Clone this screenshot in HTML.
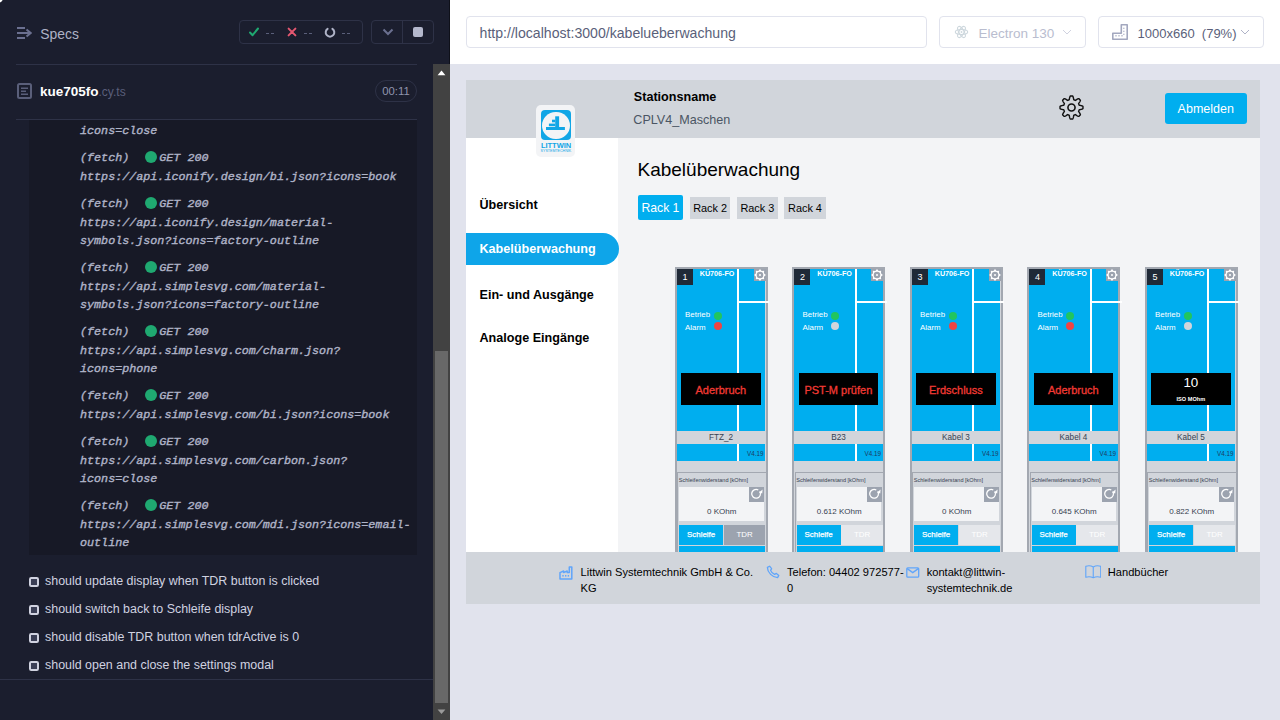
<!DOCTYPE html>
<html><head><meta charset="utf-8">
<style>
*{box-sizing:border-box;margin:0;padding:0}
html,body{width:1280px;height:720px;overflow:hidden;font-family:"Liberation Sans",sans-serif}
body{position:relative;background:#1b1e2e}
.abs{position:absolute}
#left{position:absolute;left:0;top:0;width:450px;height:720px;background:#1b1e2e;color:#d0d2e0;overflow:hidden}
.hline{position:absolute;height:1px;background:#2e3247}
.mono{font-family:"Liberation Mono",monospace;font-style:italic;font-weight:normal;-webkit-text-stroke:0.4px #afb3c7;font-size:11.73px;color:#afb3c7;white-space:pre;position:absolute;left:80px;line-height:14px}
.dot{position:absolute;left:145.2px;width:12.3px;height:12.3px;border-radius:50%;background:#1fa971}
.test{position:absolute;left:45px;font-size:12.45px;line-height:14px;color:#d0d2e0;white-space:nowrap}
.cb{position:absolute;left:28.8px;width:10.2px;height:10.2px;border:2px solid #d0d2e0;background:#3b3f56;border-radius:2.2px}
#right{position:absolute;left:450px;top:0;width:830px;height:720px;background:#e1e3ed}
#toolbar{position:absolute;left:0;top:0;width:830px;height:64px;background:#fff}
.inp{position:absolute;top:16px;height:32px;border:1px solid #e1e3ed;border-radius:4px;background:#fff;font-size:14px;color:#5a5f7a;white-space:nowrap}
/* APPCSS */
#app{position:absolute;left:16px;top:80px;width:794px;height:524px;background:#f3f4f6;overflow:hidden;color:#000}
#app .a{position:absolute;white-space:nowrap}
.hdr{position:absolute;left:0;top:0;width:794px;height:58px;background:#d1d5db}
.side{position:absolute;left:0;top:58px;width:152px;height:414px;background:#fff}
.foot{position:absolute;left:0;top:472px;width:794px;height:52px;background:#d1d5db}
.mod{position:absolute;width:93px;height:300px;background:#d1d5db;border:2px solid #a3a8b1;border-bottom:none}
.mod>div{position:absolute}
.m-blue{left:0;top:0;width:88.2px;height:192px;background:#00aeef}
.m-vl{left:60.4px;top:0;width:2.2px;height:192px;background:#fff}
.m-hl{left:60.4px;top:31.7px;width:32px;height:2.8px;background:#fff}
.m-num{left:0;top:0;width:16.1px;height:16px;background:#1f2937;color:#fff;font-size:9px;line-height:16px;text-align:center}
.m-type{left:22.8px;top:-0.3px;font-size:7.2px;font-weight:bold;color:#fff;white-space:nowrap}
.m-gear{left:76.8px;top:0;width:12.3px;height:12px;background:#9ca3af;display:flex;align-items:center;justify-content:center}
.m-gear svg{display:block}
.m-lbl{left:8.2px;font-size:7.9px;color:#fff;white-space:nowrap}
.m-led{left:37.1px;width:8px;height:8px;border-radius:50%}
.m-disp{left:4.2px;top:103.9px;width:79.5px;height:32px;background:#000;text-align:center}
.m-err{display:block;color:#f23a34;-webkit-text-stroke:0.3px #f23a34;font-size:11px;line-height:31.7px;padding-top:2.4px;white-space:nowrap}
.m-iso{position:absolute;left:0;right:0;top:2.4px;color:#fff;font-size:13.4px;line-height:16px}
.m-isol{position:absolute;left:0;right:0;top:22.7px;color:#fff;font-size:5.6px;font-weight:bold;line-height:7px}
.m-name{left:0;top:162px;width:88.2px;height:12.8px;background:#d1d5db;color:#374151;font-size:8.2px;line-height:13.9px;text-align:center;white-space:nowrap}
.m-ver{right:2.4px;top:180.9px;color:#1e3a5f;font-size:6.3px;white-space:nowrap}
.m-panel{left:0.3px;top:203.1px;width:89.6px;height:95px;background:#d1d5db;border:1px solid #a3a8b1;border-bottom:none}
.m-panel>div{position:absolute}
.m-plbl{left:0.5px;top:4.4px;font-size:5.57px;color:#374151;white-space:nowrap}
.m-box{left:1.2px;top:13.8px;width:84.6px;height:33.9px;background:#f3f4f6;text-align:center}
.m-val{position:absolute;left:0;right:0;top:19.9px;font-size:8px;line-height:10px;color:#374151;white-space:nowrap}
.m-ref{left:71.1px;top:13.8px;width:15.2px;height:15.3px;background:#9ca3af;display:flex;align-items:center;justify-content:center}
.m-btn1{left:2.3px;top:256.4px;width:43.9px;height:19.4px;background:#00aeef;color:#fff;-webkit-text-stroke:0.25px #fff;font-size:7.9px;line-height:20.8px;text-align:center}
.m-btn2{left:46.9px;top:256.4px;width:41.5px;height:19.4px;color:#fff;font-size:7.9px;line-height:20.8px;text-align:center}
.m-strip{left:2.3px;top:276.5px;width:86.1px;height:10px;background:#00aeef}
.nav{position:absolute;left:13.5px;font-size:12.6px;font-weight:bold;color:#000;white-space:nowrap;line-height:15px}
.rk{position:absolute;top:116.9px;height:21.9px;background:#d1d5db;font-size:10.9px;line-height:23.6px;text-align:center;color:#000;white-space:nowrap}
.ficon{position:absolute}
.ft{position:absolute;font-size:11.1px;line-height:15.6px;color:#000;white-space:nowrap}
/* END APPCSS */</style></head>
<body>
<div id="left">
  <svg id="corner" class="abs" style="left:0;top:0" width="4" height="4" viewBox="0 0 4 4"><path d="M0 0 H2.6 Q2 1.8 0 2.4 Z" fill="#fff"/></svg>
  <!-- header -->
  <svg class="abs" style="left:16px;top:26px" width="16" height="14" viewBox="0 0 16 14">
    <rect x="1" y="1" width="8" height="2" fill="#6b7090"/>
    <rect x="1" y="6" width="13" height="2" fill="#6b7090"/>
    <rect x="1" y="11" width="8" height="2" fill="#6b7090"/>
    <path d="M10.5 3.6 L14.6 7 L10.5 10.4" stroke="#6b7090" stroke-width="2" fill="none"/>
  </svg>
  <div class="abs" style="left:40.3px;top:26.3px;font-size:13.9px;color:#afb3c7;line-height:17px">Specs</div>

  <div class="abs" style="left:239px;top:20px;width:124px;height:24px;border:1px solid #2e3247;border-radius:4px"></div>
  <svg class="abs" style="left:249px;top:27px" width="10" height="10" viewBox="0 0 10 10"><path d="M1 5.5 L3.6 8.2 L9 1.5" stroke="#1fa971" stroke-width="2" fill="none" stroke-linecap="round" stroke-linejoin="round"/></svg>
  <div class="abs" style="left:266px;top:33px;width:3px;height:1px;background:#5a5f7a"></div><div class="abs" style="left:271px;top:33px;width:3px;height:1px;background:#5a5f7a"></div>
  <svg class="abs" style="left:287px;top:27px" width="10" height="10" viewBox="0 0 10 10"><path d="M1.6 1.6 L8.4 8.4 M8.4 1.6 L1.6 8.4" stroke="#e45770" stroke-width="2" fill="none" stroke-linecap="round"/></svg>
  <div class="abs" style="left:304px;top:33px;width:3px;height:1px;background:#5a5f7a"></div><div class="abs" style="left:309px;top:33px;width:3px;height:1px;background:#5a5f7a"></div>
  <svg class="abs" style="left:324px;top:27px" width="12" height="11" viewBox="0 0 12 11"><path d="M3.6 1.8 A4.3 4.3 0 1 0 8.4 1.8" stroke="#afb3c7" stroke-width="2" fill="none" stroke-linecap="round"/></svg>
  <div class="abs" style="left:342px;top:33px;width:3px;height:1px;background:#5a5f7a"></div><div class="abs" style="left:347px;top:33px;width:3px;height:1px;background:#5a5f7a"></div>

  <div class="abs" style="left:371px;top:20px;width:63px;height:24px;border:1px solid #2e3247;border-radius:4px"></div>
  <div class="abs" style="left:402px;top:20px;width:1px;height:24px;background:#2e3247"></div>
  <svg class="abs" style="left:382px;top:28px" width="12" height="8" viewBox="0 0 12 8"><path d="M1.5 1.5 L6 6 L10.5 1.5" stroke="#6b7090" stroke-width="2" fill="none"/></svg>
  <div class="abs" style="left:413px;top:27px;width:10px;height:10px;background:#b4b8cc;border-radius:2px"></div>

  <div class="hline" style="left:16px;top:64px;width:401px"></div>
  <div class="hline" style="left:16px;top:119px;width:401px"></div>

  <!-- file row -->
  <svg class="abs" style="left:17px;top:83px" width="15" height="16" viewBox="0 0 15 16"><rect x="1" y="1" width="13" height="14" rx="1.5" stroke="#5a5f7a" stroke-width="2" fill="none"/><rect x="4" y="4.5" width="7" height="1.5" fill="#5a5f7a"/><rect x="4" y="7.5" width="5" height="1.5" fill="#5a5f7a"/><rect x="4" y="10.5" width="7" height="1.5" fill="#5a5f7a"/></svg>
  <div class="abs" style="left:40px;top:84.2px;font-size:13.5px;line-height:16px;color:#fff;font-weight:bold">kue705fo<span style="font-weight:normal;color:#5a5f7a;font-size:12px">.cy.ts</span></div>
  <div class="abs" style="left:375px;top:80px;width:42px;height:22px;border:1px solid #2e3247;border-radius:11px;font-size:11.3px;color:#9095ad;text-align:center;line-height:21.6px">00:11</div>

  <!-- command log -->
  <div class="abs" style="left:29px;top:120px;width:388px;height:435px;background:#171926"></div>
  <div class="mono" style="top:123.6px">icons=close</div>
  <div class="mono" style="top:150.7px">(fetch)</div><div class="dot" style="top:151.0px"></div><div class="mono" style="left:159.3px;top:150.7px">GET 200</div>
  <div class="mono" style="top:169.6px">https://api.iconify.design/bi.json?icons=book</div>
  <div class="mono" style="top:196.7px">(fetch)</div><div class="dot" style="top:197.0px"></div><div class="mono" style="left:159.3px;top:196.7px">GET 200</div>
  <div class="mono" style="top:215.6px">https://api.iconify.design/material-</div>
  <div class="mono" style="top:233.6px">symbols.json?icons=factory-outline</div>
  <div class="mono" style="top:260.7px">(fetch)</div><div class="dot" style="top:261.0px"></div><div class="mono" style="left:159.3px;top:260.7px">GET 200</div>
  <div class="mono" style="top:279.6px">https://api.simplesvg.com/material-</div>
  <div class="mono" style="top:297.6px">symbols.json?icons=factory-outline</div>
  <div class="mono" style="top:324.7px">(fetch)</div><div class="dot" style="top:325.0px"></div><div class="mono" style="left:159.3px;top:324.7px">GET 200</div>
  <div class="mono" style="top:343.6px">https://api.simplesvg.com/charm.json?</div>
  <div class="mono" style="top:361.6px">icons=phone</div>
  <div class="mono" style="top:388.7px">(fetch)</div><div class="dot" style="top:389.0px"></div><div class="mono" style="left:159.3px;top:388.7px">GET 200</div>
  <div class="mono" style="top:407.6px">https://api.simplesvg.com/bi.json?icons=book</div>
  <div class="mono" style="top:434.7px">(fetch)</div><div class="dot" style="top:435.0px"></div><div class="mono" style="left:159.3px;top:434.7px">GET 200</div>
  <div class="mono" style="top:453.6px">https://api.simplesvg.com/carbon.json?</div>
  <div class="mono" style="top:471.6px">icons=close</div>
  <div class="mono" style="top:498.7px">(fetch)</div><div class="dot" style="top:499.0px"></div><div class="mono" style="left:159.3px;top:498.7px">GET 200</div>
  <div class="mono" style="top:517.6px">https://api.simplesvg.com/mdi.json?icons=email-</div>
  <div class="mono" style="top:535.6px">outline</div>

  <div class="cb" style="top:576.7px"></div><div class="test" style="top:574.3px">should update display when TDR button is clicked</div>
  <div class="cb" style="top:604.7px"></div><div class="test" style="top:602.3px">should switch back to Schleife display</div>
  <div class="cb" style="top:632.7px"></div><div class="test" style="top:630.3px">should disable TDR button when tdrActive is 0</div>
  <div class="cb" style="top:660.7px"></div><div class="test" style="top:658.3px">should open and close the settings modal</div>
  <div class="hline" style="left:0px;top:679px;width:433px"></div>
  <!-- scrollbar -->
  <div class="abs" style="left:449px;top:0;width:1px;height:64px;background:#0e1019"></div>
  <div class="abs" style="left:433px;top:64px;width:17px;height:656px;background:#424242"></div>
  <div class="abs" style="left:435px;top:350.8px;width:13px;height:352.2px;background:#686868"></div>
  <svg class="abs" style="left:437px;top:70px" width="9" height="6" viewBox="0 0 9 6"><path d="M0.6 5.2 L4.5 0.6 L8.4 5.2Z" fill="#fff"/></svg>
  <svg class="abs" style="left:437px;top:708.5px" width="9" height="6" viewBox="0 0 9 6"><path d="M0.6 0.6 L4.5 5 L8.4 0.6Z" fill="#9a9a9a"/></svg>
</div>

<div id="right">
  <div id="toolbar">
    <div class="inp" style="left:16px;width:461px;padding-left:12.6px;line-height:33px;font-size:14.1px">http://localhost:3000/kabelueberwachung</div>
    <div class="inp" style="left:489px;width:147px;padding-left:38.5px;line-height:33px;color:#b9bdcf;font-size:13.5px">Electron 130</div>
    <svg class="abs" style="left:504px;top:24px" width="15" height="16" viewBox="0 0 15 16"><g fill="none" stroke="#cdd7dd" stroke-width="1.1" transform="translate(7.5 8)"><ellipse rx="6.2" ry="2.5"/><ellipse rx="6.2" ry="2.5" transform="rotate(60)"/><ellipse rx="6.2" ry="2.5" transform="rotate(120)"/></g><circle cx="7.5" cy="8" r="0.9" fill="#cdd7dd"/></svg>
    <svg class="abs" style="left:612px;top:28px" width="10" height="8" viewBox="0 0 10 8"><path d="M1 2 L5 6 L9 2" fill="none" stroke="#d0d2e0" stroke-width="1"/></svg>
    <div class="inp" style="left:648px;width:166px;padding-left:38.5px;line-height:33px;font-size:13px">1000x660&nbsp; (79%)</div>
    <svg class="abs" style="left:662px;top:24px" width="16" height="16" viewBox="0 0 16 16"><path d="M0.8 9.2 H9.3 V0.8 H15.2 V15.2 H0.8 Z" fill="none" stroke="#a3a8bf" stroke-width="1.6" stroke-linejoin="round"/><path d="M4 11 V12.4 M7 11 V12.4 M10 11 V12.4 M11.1 4.3 H12.5 M11.1 7.2 H12.5 M11.1 10.2 H12.5" stroke="#a3a8bf" stroke-width="1.1"/></svg>
    <svg class="abs" style="left:790px;top:28px" width="10" height="8" viewBox="0 0 10 8"><path d="M1 2 L5 6 L9 2" fill="none" stroke="#afb3c7" stroke-width="1"/></svg>
  </div>
  <div id="app">
  <div class="hdr"></div>
  <div class="side"></div>
  <div class="foot"></div>
  <!-- logo -->
  <div class="a" style="left:69.7px;top:25.2px;width:39.4px;height:52.1px;background:#f3f4f6;border-radius:5px"></div>
  <div class="a" style="left:74.6px;top:29.6px;width:30.3px;height:30.7px;background:#11a6e6;border-radius:4px"></div>
  <div class="a" style="left:76px;top:31.6px;width:27.8px;height:27.7px;background:#f3f4f6;border-radius:50%"></div>
  <svg class="a" style="left:76px;top:31.6px" width="28" height="28" viewBox="0 0 28 28">
    <rect x="13.2" y="4.3" width="3.9" height="13.7" fill="#11a6e6"/>
    <rect x="4" y="15" width="18.9" height="3" fill="#11a6e6"/>
    <rect x="6.9" y="11.6" width="6.3" height="2.6" fill="#11a6e6"/>
    <rect x="10" y="7.7" width="3.2" height="2.6" fill="#11a6e6"/>
  </svg>
  <div class="a" style="left:73.6px;top:61.8px;width:33px;text-align:center;font-size:7.5px;font-weight:bold;color:#11a6e6;line-height:8px">LITTWIN</div>
  <div class="a" style="left:74.4px;top:69.3px;width:31px;text-align:center;font-size:3.6px;color:#11a6e6;line-height:4px">SYSTEMTECHNIK</div>

  <div class="a" style="left:167.8px;top:9.9px;font-size:12.6px;font-weight:bold;line-height:15px">Stationsname</div>
  <div class="a" style="left:167.3px;top:32.9px;font-size:12.6px;color:#4b5563;line-height:15px">CPLV4_Maschen</div>
  <svg class="a" style="left:592.7px;top:15px" width="25" height="25" viewBox="0 0 24.6 24.6"><g fill="none" stroke="#111" stroke-width="1.4" stroke-linejoin="round"><path d="M23.60 12.30 L23.60 12.52 L23.59 12.74 L23.58 12.97 L23.57 13.19 L23.55 13.41 L23.32 13.60 L22.96 13.77 L22.56 13.93 L22.14 14.06 L21.72 14.17 L21.29 14.27 L20.87 14.36 L20.47 14.43 L20.10 14.50 L19.86 14.59 L19.81 14.74 L19.76 14.89 L19.71 15.03 L19.66 15.18 L19.60 15.32 L19.54 15.47 L19.47 15.61 L19.41 15.75 L19.34 15.89 L19.27 16.02 L19.37 16.26 L19.58 16.57 L19.81 16.90 L20.05 17.26 L20.28 17.63 L20.50 18.02 L20.70 18.41 L20.88 18.79 L21.02 19.17 L21.04 19.47 L20.89 19.64 L20.75 19.81 L20.60 19.97 L20.45 20.13 L20.29 20.29 L20.13 20.45 L19.97 20.60 L19.81 20.75 L19.64 20.89 L19.47 21.04 L19.17 21.02 L18.79 20.88 L18.41 20.70 L18.02 20.50 L17.63 20.28 L17.26 20.05 L16.90 19.81 L16.57 19.58 L16.26 19.37 L16.02 19.27 L15.89 19.34 L15.75 19.41 L15.61 19.47 L15.47 19.54 L15.32 19.60 L15.18 19.66 L15.03 19.71 L14.89 19.76 L14.74 19.81 L14.59 19.86 L14.50 20.10 L14.43 20.47 L14.36 20.87 L14.27 21.29 L14.17 21.72 L14.06 22.14 L13.93 22.56 L13.77 22.96 L13.60 23.32 L13.41 23.55 L13.19 23.57 L12.97 23.58 L12.74 23.59 L12.52 23.60 L12.30 23.60 L12.08 23.60 L11.86 23.59 L11.63 23.58 L11.41 23.57 L11.19 23.55 L11.00 23.32 L10.83 22.96 L10.67 22.56 L10.54 22.14 L10.43 21.72 L10.33 21.29 L10.24 20.87 L10.17 20.47 L10.10 20.10 L10.01 19.86 L9.86 19.81 L9.71 19.76 L9.57 19.71 L9.42 19.66 L9.28 19.60 L9.13 19.54 L8.99 19.47 L8.85 19.41 L8.71 19.34 L8.58 19.27 L8.34 19.37 L8.03 19.58 L7.70 19.81 L7.34 20.05 L6.97 20.28 L6.58 20.50 L6.19 20.70 L5.81 20.88 L5.43 21.02 L5.13 21.04 L4.96 20.89 L4.79 20.75 L4.63 20.60 L4.47 20.45 L4.31 20.29 L4.15 20.13 L4.00 19.97 L3.85 19.81 L3.71 19.64 L3.56 19.47 L3.58 19.17 L3.72 18.79 L3.90 18.41 L4.10 18.02 L4.32 17.63 L4.55 17.26 L4.79 16.90 L5.02 16.57 L5.23 16.26 L5.33 16.02 L5.26 15.89 L5.19 15.75 L5.13 15.61 L5.06 15.47 L5.00 15.32 L4.94 15.18 L4.89 15.03 L4.84 14.89 L4.79 14.74 L4.74 14.59 L4.50 14.50 L4.13 14.43 L3.73 14.36 L3.31 14.27 L2.88 14.17 L2.46 14.06 L2.04 13.93 L1.64 13.77 L1.28 13.60 L1.05 13.41 L1.03 13.19 L1.02 12.97 L1.01 12.74 L1.00 12.52 L1.00 12.30 L1.00 12.08 L1.01 11.86 L1.02 11.63 L1.03 11.41 L1.05 11.19 L1.28 11.00 L1.64 10.83 L2.04 10.67 L2.46 10.54 L2.88 10.43 L3.31 10.33 L3.73 10.24 L4.13 10.17 L4.50 10.10 L4.74 10.01 L4.79 9.86 L4.84 9.71 L4.89 9.57 L4.94 9.42 L5.00 9.28 L5.06 9.13 L5.13 8.99 L5.19 8.85 L5.26 8.71 L5.33 8.58 L5.23 8.34 L5.02 8.03 L4.79 7.70 L4.55 7.34 L4.32 6.97 L4.10 6.58 L3.90 6.19 L3.72 5.81 L3.58 5.43 L3.56 5.13 L3.71 4.96 L3.85 4.79 L4.00 4.63 L4.15 4.47 L4.31 4.31 L4.47 4.15 L4.63 4.00 L4.79 3.85 L4.96 3.71 L5.13 3.56 L5.43 3.58 L5.81 3.72 L6.19 3.90 L6.58 4.10 L6.97 4.32 L7.34 4.55 L7.70 4.79 L8.03 5.02 L8.34 5.23 L8.58 5.33 L8.71 5.26 L8.85 5.19 L8.99 5.13 L9.13 5.06 L9.28 5.00 L9.42 4.94 L9.57 4.89 L9.71 4.84 L9.86 4.79 L10.01 4.74 L10.10 4.50 L10.17 4.13 L10.24 3.73 L10.33 3.31 L10.43 2.88 L10.54 2.46 L10.67 2.04 L10.83 1.64 L11.00 1.28 L11.19 1.05 L11.41 1.03 L11.63 1.02 L11.86 1.01 L12.08 1.00 L12.30 1.00 L12.52 1.00 L12.74 1.01 L12.97 1.02 L13.19 1.03 L13.41 1.05 L13.60 1.28 L13.77 1.64 L13.93 2.04 L14.06 2.46 L14.17 2.88 L14.27 3.31 L14.36 3.73 L14.43 4.13 L14.50 4.50 L14.59 4.74 L14.74 4.79 L14.89 4.84 L15.03 4.89 L15.18 4.94 L15.32 5.00 L15.47 5.06 L15.61 5.13 L15.75 5.19 L15.89 5.26 L16.02 5.33 L16.26 5.23 L16.57 5.02 L16.90 4.79 L17.26 4.55 L17.63 4.32 L18.02 4.10 L18.41 3.90 L18.79 3.72 L19.17 3.58 L19.47 3.56 L19.64 3.71 L19.81 3.85 L19.97 4.00 L20.13 4.15 L20.29 4.31 L20.45 4.47 L20.60 4.63 L20.75 4.79 L20.89 4.96 L21.04 5.13 L21.02 5.43 L20.88 5.81 L20.70 6.19 L20.50 6.58 L20.28 6.97 L20.05 7.34 L19.81 7.70 L19.58 8.03 L19.37 8.34 L19.27 8.58 L19.34 8.71 L19.41 8.85 L19.47 8.99 L19.54 9.13 L19.60 9.28 L19.66 9.42 L19.71 9.57 L19.76 9.71 L19.81 9.86 L19.86 10.01 L20.10 10.10 L20.47 10.17 L20.87 10.24 L21.29 10.33 L21.72 10.43 L22.14 10.54 L22.56 10.67 L22.96 10.83 L23.32 11.00 L23.55 11.19 L23.57 11.41 L23.58 11.63 L23.59 11.86 L23.60 12.08 L23.60 12.30Z"/><circle cx="12.3" cy="12.3" r="3.5" stroke-width="1.6"/></g></svg>
  <div class="a" style="left:698.5px;top:13px;width:82.5px;height:31.4px;background:#00aeef;border-radius:3px;color:#fff;font-size:12.5px;line-height:32.5px;text-align:center">Abmelden</div>

  <div class="nav" style="left:13.5px;top:117.8px">Übersicht</div>
  <div class="a" style="left:0;top:153.1px;width:152.5px;height:31.6px;background:#0ea5e9;border-radius:0 16px 16px 0"></div>
  <div class="nav" style="top:161.6px;color:#fff">Kabelüberwachung</div>
  <div class="nav" style="top:207.5px">Ein- und Ausgänge</div>
  <div class="nav" style="top:250.5px">Analoge Eingänge</div>

  <div class="a" style="left:171.5px;top:79px;font-size:19px;line-height:22px">Kabelüberwachung</div>
  <div class="a" style="left:171.5px;top:115.3px;width:45.9px;height:25px;background:#00aeef;border-radius:2px;color:#fff;font-size:12.2px;line-height:26.5px;text-align:center">Rack 1</div>
  <div class="rk" style="left:224.2px;width:39.8px">Rack 2</div>
  <div class="rk" style="left:271px;width:40.7px">Rack 3</div>
  <div class="rk" style="left:318.4px;width:41.2px">Rack 4</div>

  <div class="mod" style="left:208.9px;top:187.0px"><div class="m-blue"></div><div class="m-vl"></div><div class="m-hl"></div><div class="m-num">1</div><div class="m-type">KÜ706-FO</div><div class="m-gear"><svg width="12" height="12" viewBox="0 0 12 12"><polygon points="6.00,0.10 7.65,2.03 10.17,1.83 9.97,4.35 11.90,6.00 9.97,7.65 10.17,10.17 7.65,9.97 6.00,11.90 4.35,9.97 1.83,10.17 2.03,7.65 0.10,6.00 2.03,4.35 1.83,1.83 4.35,2.03" fill="#fff"/><circle cx="6" cy="6" r="3.3" fill="#9ca3af"/><circle cx="6" cy="6" r="1" fill="#fff"/></svg></div><div class="m-lbl" style="top:40.9px">Betrieb</div><div class="m-led" style="top:42.7px;background:#22c55e"></div><div class="m-lbl" style="top:53.8px">Alarm</div><div class="m-led" style="top:53.1px;background:#ef4444"></div><div class="m-disp"><span class="m-err">Aderbruch</span></div><div class="m-name">FTZ_2</div><div class="m-ver">V4.19</div><div class="m-panel"><div class="m-plbl">Schleifenwiderstand [kOhm]</div><div class="m-box"><span class="m-val">0 KOhm</span></div><div class="m-ref"><svg width="15.6" height="15" viewBox="0 0 15.6 15" style="position:absolute;left:0;top:0"><path d="M10.70 4.28 A4.4 4.4 0 1 1 9.30 2.99" stroke="#fff" stroke-width="1.3" fill="none"/><path d="M10.2 5.6 L13.6 2.6 L13.2 6.6 Z" fill="#fff"/></svg></div></div><div class="m-btn1">Schleife</div><div class="m-btn2" style="background:#9ca3af">TDR</div><div class="m-strip"></div></div>
<div class="mod" style="left:326.4px;top:187.0px"><div class="m-blue"></div><div class="m-vl"></div><div class="m-hl"></div><div class="m-num">2</div><div class="m-type">KÜ706-FO</div><div class="m-gear"><svg width="12" height="12" viewBox="0 0 12 12"><polygon points="6.00,0.10 7.65,2.03 10.17,1.83 9.97,4.35 11.90,6.00 9.97,7.65 10.17,10.17 7.65,9.97 6.00,11.90 4.35,9.97 1.83,10.17 2.03,7.65 0.10,6.00 2.03,4.35 1.83,1.83 4.35,2.03" fill="#fff"/><circle cx="6" cy="6" r="3.3" fill="#9ca3af"/><circle cx="6" cy="6" r="1" fill="#fff"/></svg></div><div class="m-lbl" style="top:40.9px">Betrieb</div><div class="m-led" style="top:42.7px;background:#22c55e"></div><div class="m-lbl" style="top:53.8px">Alarm</div><div class="m-led" style="top:53.1px;background:#d1d5db"></div><div class="m-disp"><span class="m-err">PST-M prüfen</span></div><div class="m-name">B23</div><div class="m-ver">V4.19</div><div class="m-panel"><div class="m-plbl">Schleifenwiderstand [kOhm]</div><div class="m-box"><span class="m-val">0.612 KOhm</span></div><div class="m-ref"><svg width="15.6" height="15" viewBox="0 0 15.6 15" style="position:absolute;left:0;top:0"><path d="M10.70 4.28 A4.4 4.4 0 1 1 9.30 2.99" stroke="#fff" stroke-width="1.3" fill="none"/><path d="M10.2 5.6 L13.6 2.6 L13.2 6.6 Z" fill="#fff"/></svg></div></div><div class="m-btn1">Schleife</div><div class="m-btn2" style="background:#e5e7eb">TDR</div><div class="m-strip"></div></div>
<div class="mod" style="left:443.9px;top:187.0px"><div class="m-blue"></div><div class="m-vl"></div><div class="m-hl"></div><div class="m-num">3</div><div class="m-type">KÜ706-FO</div><div class="m-gear"><svg width="12" height="12" viewBox="0 0 12 12"><polygon points="6.00,0.10 7.65,2.03 10.17,1.83 9.97,4.35 11.90,6.00 9.97,7.65 10.17,10.17 7.65,9.97 6.00,11.90 4.35,9.97 1.83,10.17 2.03,7.65 0.10,6.00 2.03,4.35 1.83,1.83 4.35,2.03" fill="#fff"/><circle cx="6" cy="6" r="3.3" fill="#9ca3af"/><circle cx="6" cy="6" r="1" fill="#fff"/></svg></div><div class="m-lbl" style="top:40.9px">Betrieb</div><div class="m-led" style="top:42.7px;background:#22c55e"></div><div class="m-lbl" style="top:53.8px">Alarm</div><div class="m-led" style="top:53.1px;background:#ef4444"></div><div class="m-disp"><span class="m-err">Erdschluss</span></div><div class="m-name">Kabel 3</div><div class="m-ver">V4.19</div><div class="m-panel"><div class="m-plbl">Schleifenwiderstand [kOhm]</div><div class="m-box"><span class="m-val">0 KOhm</span></div><div class="m-ref"><svg width="15.6" height="15" viewBox="0 0 15.6 15" style="position:absolute;left:0;top:0"><path d="M10.70 4.28 A4.4 4.4 0 1 1 9.30 2.99" stroke="#fff" stroke-width="1.3" fill="none"/><path d="M10.2 5.6 L13.6 2.6 L13.2 6.6 Z" fill="#fff"/></svg></div></div><div class="m-btn1">Schleife</div><div class="m-btn2" style="background:#e5e7eb">TDR</div><div class="m-strip"></div></div>
<div class="mod" style="left:561.4px;top:187.0px"><div class="m-blue"></div><div class="m-vl"></div><div class="m-hl"></div><div class="m-num">4</div><div class="m-type">KÜ706-FO</div><div class="m-gear"><svg width="12" height="12" viewBox="0 0 12 12"><polygon points="6.00,0.10 7.65,2.03 10.17,1.83 9.97,4.35 11.90,6.00 9.97,7.65 10.17,10.17 7.65,9.97 6.00,11.90 4.35,9.97 1.83,10.17 2.03,7.65 0.10,6.00 2.03,4.35 1.83,1.83 4.35,2.03" fill="#fff"/><circle cx="6" cy="6" r="3.3" fill="#9ca3af"/><circle cx="6" cy="6" r="1" fill="#fff"/></svg></div><div class="m-lbl" style="top:40.9px">Betrieb</div><div class="m-led" style="top:42.7px;background:#22c55e"></div><div class="m-lbl" style="top:53.8px">Alarm</div><div class="m-led" style="top:53.1px;background:#ef4444"></div><div class="m-disp"><span class="m-err">Aderbruch</span></div><div class="m-name">Kabel 4</div><div class="m-ver">V4.19</div><div class="m-panel"><div class="m-plbl">Schleifenwiderstand [kOhm]</div><div class="m-box"><span class="m-val">0.645 KOhm</span></div><div class="m-ref"><svg width="15.6" height="15" viewBox="0 0 15.6 15" style="position:absolute;left:0;top:0"><path d="M10.70 4.28 A4.4 4.4 0 1 1 9.30 2.99" stroke="#fff" stroke-width="1.3" fill="none"/><path d="M10.2 5.6 L13.6 2.6 L13.2 6.6 Z" fill="#fff"/></svg></div></div><div class="m-btn1">Schleife</div><div class="m-btn2" style="background:#e5e7eb">TDR</div><div class="m-strip"></div></div>
<div class="mod" style="left:678.9px;top:187.0px"><div class="m-blue"></div><div class="m-vl"></div><div class="m-hl"></div><div class="m-num">5</div><div class="m-type">KÜ706-FO</div><div class="m-gear"><svg width="12" height="12" viewBox="0 0 12 12"><polygon points="6.00,0.10 7.65,2.03 10.17,1.83 9.97,4.35 11.90,6.00 9.97,7.65 10.17,10.17 7.65,9.97 6.00,11.90 4.35,9.97 1.83,10.17 2.03,7.65 0.10,6.00 2.03,4.35 1.83,1.83 4.35,2.03" fill="#fff"/><circle cx="6" cy="6" r="3.3" fill="#9ca3af"/><circle cx="6" cy="6" r="1" fill="#fff"/></svg></div><div class="m-lbl" style="top:40.9px">Betrieb</div><div class="m-led" style="top:42.7px;background:#22c55e"></div><div class="m-lbl" style="top:53.8px">Alarm</div><div class="m-led" style="top:53.1px;background:#d1d5db"></div><div class="m-disp"><span class="m-iso">10</span><span class="m-isol">ISO MOhm</span></div><div class="m-name">Kabel 5</div><div class="m-ver">V4.19</div><div class="m-panel"><div class="m-plbl">Schleifenwiderstand [kOhm]</div><div class="m-box"><span class="m-val">0.822 KOhm</span></div><div class="m-ref"><svg width="15.6" height="15" viewBox="0 0 15.6 15" style="position:absolute;left:0;top:0"><path d="M10.70 4.28 A4.4 4.4 0 1 1 9.30 2.99" stroke="#fff" stroke-width="1.3" fill="none"/><path d="M10.2 5.6 L13.6 2.6 L13.2 6.6 Z" fill="#fff"/></svg></div></div><div class="m-btn1">Schleife</div><div class="m-btn2" style="background:#e5e7eb">TDR</div><div class="m-strip"></div></div>

  <div class="foot"></div>
  <svg class="a" style="left:92.5px;top:485.5px" width="14" height="14" viewBox="0 0 14 14"><path d="M1 13 V6.6 L4.6 5 V6.6 L8.2 5 V6.6 H10.3 V1 H12.8 V13 Z" fill="none" stroke="#60a5fa" stroke-width="1.5" stroke-linejoin="round"/><rect x="3.3" y="9" width="1.4" height="1.6" fill="#60a5fa"/><rect x="6" y="9" width="1.4" height="1.6" fill="#60a5fa"/><rect x="8.7" y="9" width="1.4" height="1.6" fill="#60a5fa"/></svg>
  <svg class="a" style="left:299.5px;top:485px" width="14" height="14" viewBox="0 0 14 14"><path d="M3.6 1.2 L5.6 3.6 L4.6 5.4 C5.3 7.3 6.7 8.7 8.6 9.4 L10.4 8.4 L12.8 10.4 L11.6 12.6 C6.6 12.6 1.4 7.4 1.4 2.4 Z" fill="none" stroke="#60a5fa" stroke-width="1.3" stroke-linejoin="round"/></svg>
  <svg class="a" style="left:440px;top:487px" width="13.5" height="11" viewBox="0 0 13.5 11"><rect x="0.8" y="0.8" width="11.9" height="9.4" rx="1" fill="none" stroke="#60a5fa" stroke-width="1.3"/><path d="M1.2 1.6 L6.75 5.6 L12.3 1.6" fill="none" stroke="#60a5fa" stroke-width="1.3"/></svg>
  <svg class="a" style="left:618.7px;top:485px" width="16.5" height="13.5" viewBox="0 0 16.5 13.5"><path d="M8.25 2 C6.4 0.9 3.2 0.6 0.8 1.3 V12.2 C3.2 11.5 6.4 11.8 8.25 12.8 C10.1 11.8 13.3 11.5 15.7 12.2 V1.3 C13.3 0.6 10.1 0.9 8.25 2 Z M8.25 2 V12.8" fill="none" stroke="#60a5fa" stroke-width="1.1" stroke-linejoin="round"/></svg>
  <div class="ft" style="left:114.5px;top:485.2px">Littwin Systemtechnik GmbH &amp; Co.<br>KG</div>
  <div class="ft" style="left:321px;top:485.2px">Telefon: 04402 972577-<br>0</div>
  <div class="ft" style="left:460.7px;top:485.2px">kontakt@littwin-<br>systemtechnik.de</div>
  <div class="ft" style="left:641.8px;top:485.2px">Handbücher</div>
</div>
</div>
</body></html>
